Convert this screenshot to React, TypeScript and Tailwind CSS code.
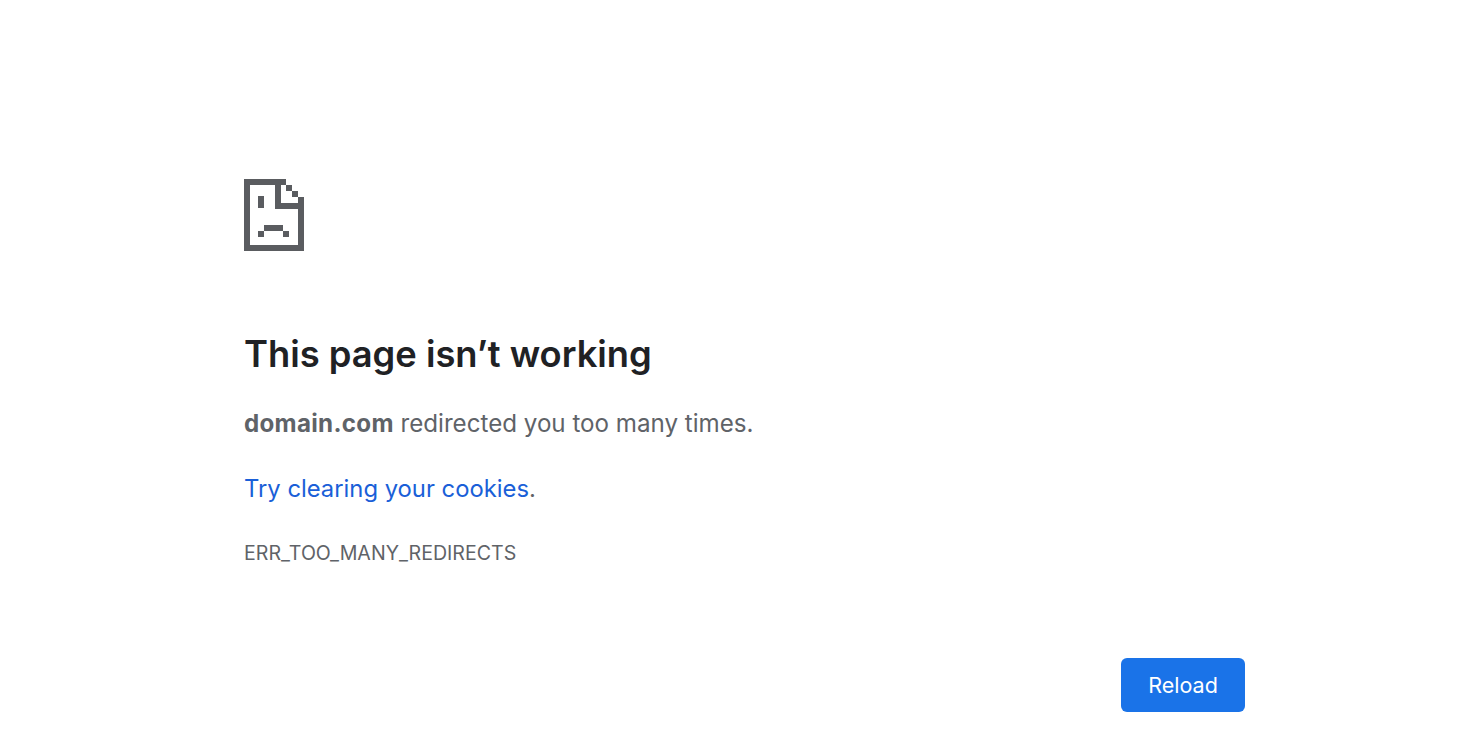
import React from 'react';

function SadPageIcon() {
  return (
    <svg width="60" height="72" viewBox="0 0 60 72" fill="#5a5c60" className="block">
      {/* sheet outline */}
      <rect x="0" y="0" width="42" height="6" />
      <rect x="0" y="0" width="6" height="72" />
      <rect x="0" y="66" width="60" height="6" />
      <rect x="54" y="18" width="6" height="54" />
      <rect x="42" y="6" width="6" height="6" />
      <rect x="48" y="12" width="6" height="6" />
      {/* fold */}
      <rect x="31" y="6" width="6" height="24" />
      <rect x="31" y="24" width="23" height="6" />
      {/* face */}
      <rect x="14" y="17" width="6" height="12" />
      <rect x="20" y="46" width="19" height="6" />
      <rect x="14" y="52" width="6" height="6" />
      <rect x="39" y="52" width="6" height="6" />
    </svg>
  );
}

export default function App() {
  return (
    <div className="min-h-[752px] bg-white font-['Inter',sans-serif] overflow-hidden">
      <div className="ml-[244px] w-[1001px] pt-[179px]">
        <SadPageIcon />

        <h1 className="mt-[79px] text-[36.3px] leading-[48px] font-semibold text-[#202124]">
          This page isn’t working
        </h1>

        <p className="mt-[30px] text-[24.15px] leading-[32px] text-[#5f6368]">
          <span className="font-bold tracking-[0.3px]">domain.com</span> redirected you too many times.
        </p>

        <p className="mt-[33px] text-[23.8px] leading-[32px] text-[#5f6368]">
          <a href="#" className="text-[#1a5fd8]">Try clearing your cookies</a>.
        </p>

        <div className="mt-[36px] text-[19.6px] leading-[24px] text-[#5f6368]">
          ERR_TOO_MANY_REDIRECTS
        </div>

        <div className="mt-[93px] flex justify-end">
          <button className="h-[54px] w-[124px] rounded-[6px] bg-[#1a73e8] text-[21.5px] font-normal text-white">
            Reload
          </button>
        </div>
      </div>
    </div>
  );
}
